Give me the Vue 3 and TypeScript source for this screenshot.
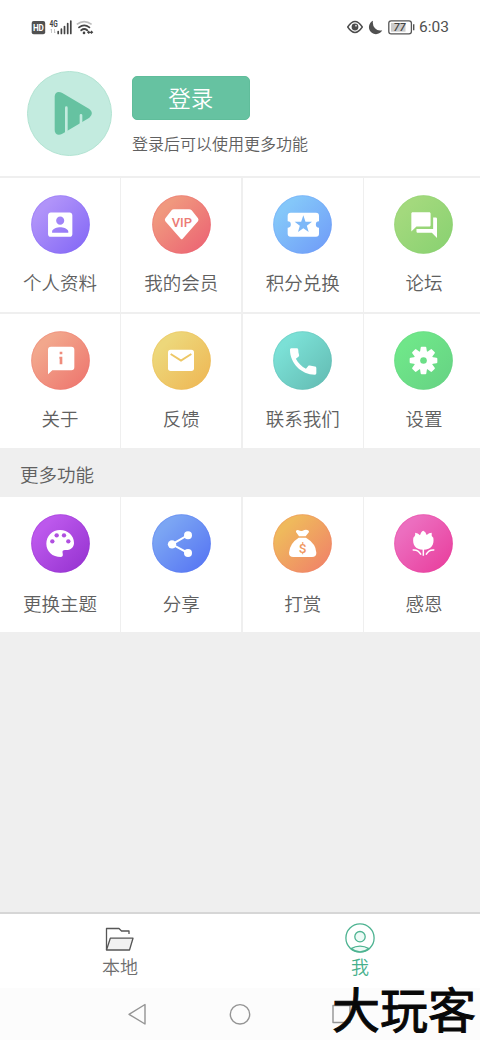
<script setup lang="ts">
interface Item {
  id: string
  label: string
  from: string
  to: string
}

const mainItems: Item[] = [
  { id: 'profile', label: '个人资料', from: '#b093f9', to: '#866bf6' },
  { id: 'vip', label: '我的会员', from: '#f0987e', to: '#ec6674' },
  { id: 'ticket', label: '积分兑换', from: '#84c7f9', to: '#719ff8' },
  { id: 'forum', label: '论坛', from: '#a3d97d', to: '#8bd272' },
  { id: 'about', label: '关于', from: '#f2a78c', to: '#ee7870' },
  { id: 'mail', label: '反馈', from: '#edd77a', to: '#eeb957' },
  { id: 'phone', label: '联系我们', from: '#7be0d6', to: '#65beb5' },
  { id: 'gear', label: '设置', from: '#6fe689', to: '#67d484' },
]

const moreItems: Item[] = [
  { id: 'palette', label: '更换主题', from: '#bc58ec', to: '#9835d2' },
  { id: 'share', label: '分享', from: '#7ba5f3', to: '#5877f3' },
  { id: 'reward', label: '打赏', from: '#efb95c', to: '#f08468' },
  { id: 'thanks', label: '感恩', from: '#ec6ebf', to: '#e9419f' },
]

const sections = [
  { title: '', items: mainItems },
  { title: '更多功能', items: moreItems },
]

const teeth = [0, 45, 90, 135, 180, 225, 270, 315]
</script>

<template>
  <div class="screen">
    <header class="status">
      <svg class="status-left" width="64" height="18" viewBox="0 0 64 18">
        <rect x=".7" y="3" width="13.5" height="13.2" rx="2" fill="#515151" />
        <text x="1.9" y="13" font-size="9" font-weight="700" fill="#fff" textLength="11" lengthAdjust="spacingAndGlyphs">HD</text>
        <text x="18.400" y="8.800" font-size="8.400" font-weight="700" fill="#444" textLength="8.200" lengthAdjust="spacingAndGlyphs">4G</text>
        <path d="M20.5 15v-4l-1 1.2M23.5 11v4l1-1.2" fill="none" stroke="#bbb" stroke-width=".8" />
        <path d="M27.200 13.600V15.400M30.400 11.200V15.400M33.500 8.600V15.400M36.700 5.600V15.400M39.800 3V15.400" stroke="#444" stroke-width="1.700" fill="none" stroke-linecap="round" />
        <path d="M45.800 6.400Q53.200 .8 60.600 6.400" fill="none" stroke="#bdbdbd" stroke-width="1.600" />
        <path d="M48 9.400Q53.200 5.400 58.400 9.400M50.200 12.300Q53.200 9.800 56.200 12.300" fill="none" stroke="#444" stroke-width="1.800" stroke-linecap="round" />
        <circle cx="53" cy="14.900" r="1.300" fill="#444" />
        <path d="M56.800 14.400h4.400M58.200 12.800l-1.500 1.500 1.500 1.300M60 12.800l1.500 1.500-1.500 1.300" fill="none" stroke="#444" stroke-width="1.100" />
      </svg>
      <div class="status-right">
        <svg width="16" height="14" viewBox="0 0 16 14">
          <path d="M.7 7Q8-3.900 15.300 7Q8 17.900 .7 7z" fill="none" stroke="#4c4c4c" stroke-width="1.400" />
          <circle cx="8" cy="7" r="3.400" fill="#4c4c4c" /><circle cx="9" cy="5.700" r=".9" fill="#ddd" />
        </svg>
        <svg class="moon" width="15" height="15" viewBox="0 0 15 15">
          <path d="M5 .8A7 7 0 1 0 14.200 10.300Q9.800 11.300 7 8.300T5 .8z" fill="#505050" />
        </svg>
        <svg class="battery" width="27" height="15" viewBox="0 0 27 15">
          <rect x=".8" y=".8" width="22.600" height="13" rx="2.400" fill="#fff" stroke="#555" stroke-width="1.300" />
          <rect x="3" y="3" width="14.500" height="8.700" fill="#ccc" />
          <text x="5.400" y="11.400" font-size="11" font-weight="500" font-style="italic" fill="#444" textLength="12" lengthAdjust="spacingAndGlyphs">77</text>
          <path d="M25.700 4.300v6" stroke="#555" stroke-width="1.400" />
        </svg>
        <span class="clock">6:03</span>
      </div>
    </header>

    <section class="account">
      <svg class="avatar" viewBox="0 0 255 255">
        <circle cx="127.500" cy="127.500" r="126" fill="#c3ebdf" stroke="#b2e3d2" stroke-width="3" />
        <path d="M83 77C83 63 94 59 106 66L187 114Q203 127 187 140L106 188C94 195 83 190 83 177z" fill="#66c2a1" />
        <path d="M118 110v82M162 133v28" stroke="#c3ebdf" stroke-width="8" stroke-linecap="round" />
      </svg>
      <div class="account-text">
        <button class="login">登录</button>
        <p>登录后可以使用更多功能</p>
      </div>
    </section>

    <template v-for="section in sections" :key="section.title">
      <h2 v-if="section.title" class="section-title">{{ section.title }}</h2>
      <section class="grid" :class="section.title ? 'more' : 'main'">
        <div v-for="item in section.items" :key="item.id" class="cell">
          <svg class="icon" viewBox="0 0 177 177" fill="#fff">
            <defs>
              <linearGradient :id="item.id" x1="0.1" y1="0.1" x2="0.9" y2="0.9">
                <stop offset="0.15" :stop-color="item.from" />
                <stop offset="1" :stop-color="item.to" />
              </linearGradient>
            </defs>
            <circle cx="88.500" cy="88.500" r="88" :fill="`url(#${item.id})`" />
            <circle cx="88.500" cy="88.500" r="86.500" fill="none" :stroke="item.to" stroke-width="3" opacity=".35" />

            <path v-if="item.id === 'profile'" transform="translate(39 40.5) scale(4.05)" d="M3 5v14c0 1.1.89 2 2 2h14c1.1 0 2-.9 2-2V5c0-1.1-.9-2-2-2H5c-1.11 0-2 .9-2 2zm12 4c0 1.66-1.34 3-3 3s-3-1.34-3-3 1.34-3 3-3 3 1.34 3 3zm-9 8c0-2 4-3.1 6-3.1s6 1.1 6 3.1v1H6v-1z" />
            <g v-else-if="item.id === 'vip'">
              <path d="M60 44Q64 42 68 43H109Q115 42 119 46L138 70Q141 75 138 79L92 131Q89 134 86 131L40 79Q37 75 40 70z" />
              <text x="59" y="95" font-size="37" font-weight="500" fill="#ec7b76" textLength="61" lengthAdjust="spacingAndGlyphs">VIP</text>
            </g>
            <g v-else-if="item.id === 'ticket'">
              <path d="M53 53H129Q138 53 138 62V79A9.500 9.500 0 0 0 138 98V116Q138 125 129 125H53Q44 125 44 116V98A9.500 9.500 0 0 0 44 79V62Q44 53 53 53z" />
              <path d="M91 61L97.500 80.500H117L101.500 92L107 111L91 99.500L75 111L80.500 92L65 80.500H84.500z" fill="#7db8f8" />
            </g>
            <path v-else-if="item.id === 'forum'" transform="translate(44.300 44.300) scale(3.85)" d="M21 6h-2v9H6v2c0 .55.45 1 1 1h11l4 4V7c0-.55-.45-1-1-1zm-4 6V3c0-.55-.45-1-1-1H3c-.55 0-1 .45-1 1v14l4-4h10c.55 0 1-.45 1-1z" />
            <g v-else-if="item.id === 'about'">
              <path d="M60 47H121Q130 47 130 56V109Q130 118 121 118H64L51 130V56Q51 47 60 47z" />
              <path d="M86 62h8v8h-8zM85 77h9v23h-8v-17h-1z" fill="#ef8c7c" />
            </g>
            <g v-else-if="item.id === 'mail'">
              <rect x="48" y="56" width="78" height="64" rx="8" />
              <path d="M56 69L87 89L118 69" fill="none" stroke="#edc766" stroke-width="6" />
            </g>
            <path v-else-if="item.id === 'phone'" transform="translate(37.800 38.800) scale(4.39)" d="M20.010 15.380c-1.230 0-2.420-.2-3.530-.56-.35-.12-.74-.03-1.010.24l-1.570 1.970c-2.830-1.350-5.480-3.900-6.890-6.830l1.950-1.660c.27-.28.35-.67.24-1.020-.37-1.110-.56-2.300-.56-3.530 0-.54-.45-.99-.99-.99H4.190C3.650 3 3 3.240 3 3.990 3 13.280 10.730 21 20.010 21c.71 0 .99-.63.99-1.180v-3.450c0-.54-.45-.99-.99-.99z" />
            <g v-else-if="item.id === 'gear'">
              <circle cx="88.500" cy="88.500" r="29" />
              <path v-for="angle in teeth" :key="angle" :transform="`rotate(${angle} 88.5 88.5)`" d="M78 64L80 50Q80 47 83 47H94Q97 47 97 50L99 64z" />
              <circle cx="88.500" cy="88.500" r="10" fill="#6bdf87" />
            </g>
            <g v-else-if="item.id === 'palette'">
              <path d="M87 48C64 48 46 66 46 89S64 129 90 129C96 129 96 123 95 118C93 111 96 108 102 108H110C121 107 129 98 129 87C129 65 111 48 87 48z" />
              <g fill="#b04fe0"><circle cx="64" cy="82" r="6.500" /><circle cx="77" cy="64" r="6.500" /><circle cx="99" cy="64" r="6.500" /><circle cx="112" cy="82" r="6.500" /></g>
            </g>
            <g v-else-if="item.id === 'share'">
              <path d="M108 63L60 91L108 117" fill="none" stroke="#fff" stroke-width="6" />
              <circle cx="60" cy="91" r="12.500" /><circle cx="108" cy="64" r="12" /><circle cx="108" cy="117" r="12" />
            </g>
            <g v-else-if="item.id === 'reward'">
              <path d="M69 51Q71 47 77 49Q83 52 89 50Q97 46 103 48Q109 49 108 54L98 67H78L69 54z" />
              <path d="M77 71H99Q129 89 130 116Q130 129 117 129H61Q48 129 48 116Q50 88 77 71z" />
              <text x="89" y="117" text-anchor="middle" font-size="41" fill="#f0985f" font-weight="500">$</text>
            </g>
            <g v-else>
              <path d="M88 50Q95 52 98 63Q105 56 113 56Q111 65 118 71C121 91 113 107 88 107S55 91 58 71Q66 64 63 56Q72 56 78 64Q81 52 88 50z" />
              <path d="M88 105V125M56 108Q73 106 81 122M121 108Q104 106 96 122" fill="none" stroke="#fff" stroke-width="4.500" />
            </g>
          </svg>
          <span class="label">{{ item.label }}</span>
        </div>
      </section>
    </template>

    <nav class="tabs">
      <div class="tab">
        <svg width="30" height="26" viewBox="0 0 30 26" fill="none" stroke="#565656" stroke-width="1.300" stroke-linejoin="round">
          <path d="M1.500 23V1.500H14L16.500 4H24V7" />
          <path d="M5.300 11.200H28L24.500 23H1.500z" fill="#f1f1f1" />
        </svg>
        <span>本地</span>
      </div>
      <div class="tab active">
        <svg width="30" height="30" viewBox="0 0 30 30" fill="none" stroke="#4db391" stroke-width="1.300">
          <circle cx="15" cy="15" r="14.100" />
          <circle cx="15" cy="13.700" r="5.200" fill="#edfaf6" />
          <path d="M6 25.600Q15 20.600 24 25.600Q15 32 6 25.600z" fill="#edfaf6" />
        </svg>
        <span>我</span>
      </div>
    </nav>

    <footer class="system">
      <svg viewBox="0 0 480 52" fill="none" stroke="#949494" stroke-width="1.400" stroke-linejoin="round">
        <path d="M145 16.500V36L129 26.300z" />
        <circle cx="240" cy="26.300" r="9.700" />
        <path d="M333 17.500H350V34.500H333z" />
      </svg>
      <span class="watermark">大玩客</span>
    </footer>
  </div>
</template>

<style>
body {
  background: #efefef;
}
</style>

<style scoped>
.screen {
  display: flex;
  flex-direction: column;
  width: 480px;
  height: 1040px;
  overflow: hidden;
  background: #efefef;
  color: #606060;
  font-family: Roboto, "Noto Sans CJK SC", sans-serif;
}
.status {
  box-sizing: border-box;
  display: flex;
  justify-content: space-between;
  flex: 0 0 56px;
  padding: 18px 32px 0 31px;
  background: #fff;
}
.status-right {
  display: flex;
  align-items: center;
  height: 18px;
}
.moon {
  margin-left: 5px;
}
.battery {
  margin-left: 5px;
}
.clock {
  width: 29px;
  margin-left: 4px;
  color: #505050;
  font-size: 15.500px;
  line-height: 19px;
  white-space: nowrap;
}
.account {
  box-sizing: border-box;
  display: flex;
  flex: 0 0 120px;
  padding: 15px 27px 0;
  gap: 20px;
  background: #fff;
}
.avatar {
  width: 85px;
  height: 85px;
}
.account-text {
  padding-top: 5px;
}
.login {
  display: block;
  width: 117.500px;
  height: 43.500px;
  padding: 2px 0 0;
  border: 1px solid #60bd9b;
  border-radius: 5px;
  background: #66c2a1;
  color: #fff;
  font: 350 22.500px/40px Roboto, "Noto Sans CJK SC", sans-serif;
}
.account-text p {
  margin: 13.500px 0 0;
  font-size: 16px;
  font-weight: 350;
  line-height: 24px;
}
.grid {
  display: grid;
  grid-template-columns: repeat(4, 120px);
  grid-auto-rows: 134px;
  gap: 2px 1.330px;
  flex: none;
}
.grid.main {
  padding-top: 2px;
}
.grid.more {
  grid-auto-rows: 135px;
}
.cell {
  display: flex;
  flex-direction: column;
  align-items: center;
  padding-top: 16.500px;
  box-sizing: border-box;
  background: #fff;
}
.more .cell {
  padding-top: 17px;
}
.icon {
  flex: none;
  width: 59px;
  height: 59px;
}
.label {
  margin-top: 16px;
  font-size: 18.500px;
  font-weight: 350;
  line-height: 28px;
}
.more .label {
  margin-top: 18px;
}
.section-title {
  box-sizing: border-box;
  flex: 0 0 49px;
  margin: 0;
  padding: 2px 0 0 20px;
  font-size: 18.500px;
  font-weight: 350;
  line-height: 52px;
  height: 49px;
}
.tabs {
  display: grid;
  grid-template-columns: 1fr 1fr;
  box-sizing: border-box;
  flex: 0 0 76px;
  margin-top: auto;
  border-top: 2px solid #d6d6d6;
  background: #fff;
}
.tab {
  display: flex;
  flex-direction: column;
  align-items: center;
  justify-content: flex-end;
  padding-bottom: 7px;
  font-size: 18px;
  font-weight: 350;
  line-height: 26px;
  color: #6e6e6e;
}
.tab svg {
  margin-bottom: 2px;
}
.tab.active {
  color: #46b08c;
}
.system {
  position: relative;
  flex: 0 0 52px;
  background: #fcfcfc;
}
.system svg {
  display: block;
  width: 480px;
  height: 52px;
}
.watermark {
  position: absolute;
  top: -6px;
  left: 332px;
  color: #080808;
  font-size: 48px;
  font-weight: 400;
  line-height: 60px;
  white-space: nowrap;
  -webkit-text-stroke: 1px #080808;
}
</style>
